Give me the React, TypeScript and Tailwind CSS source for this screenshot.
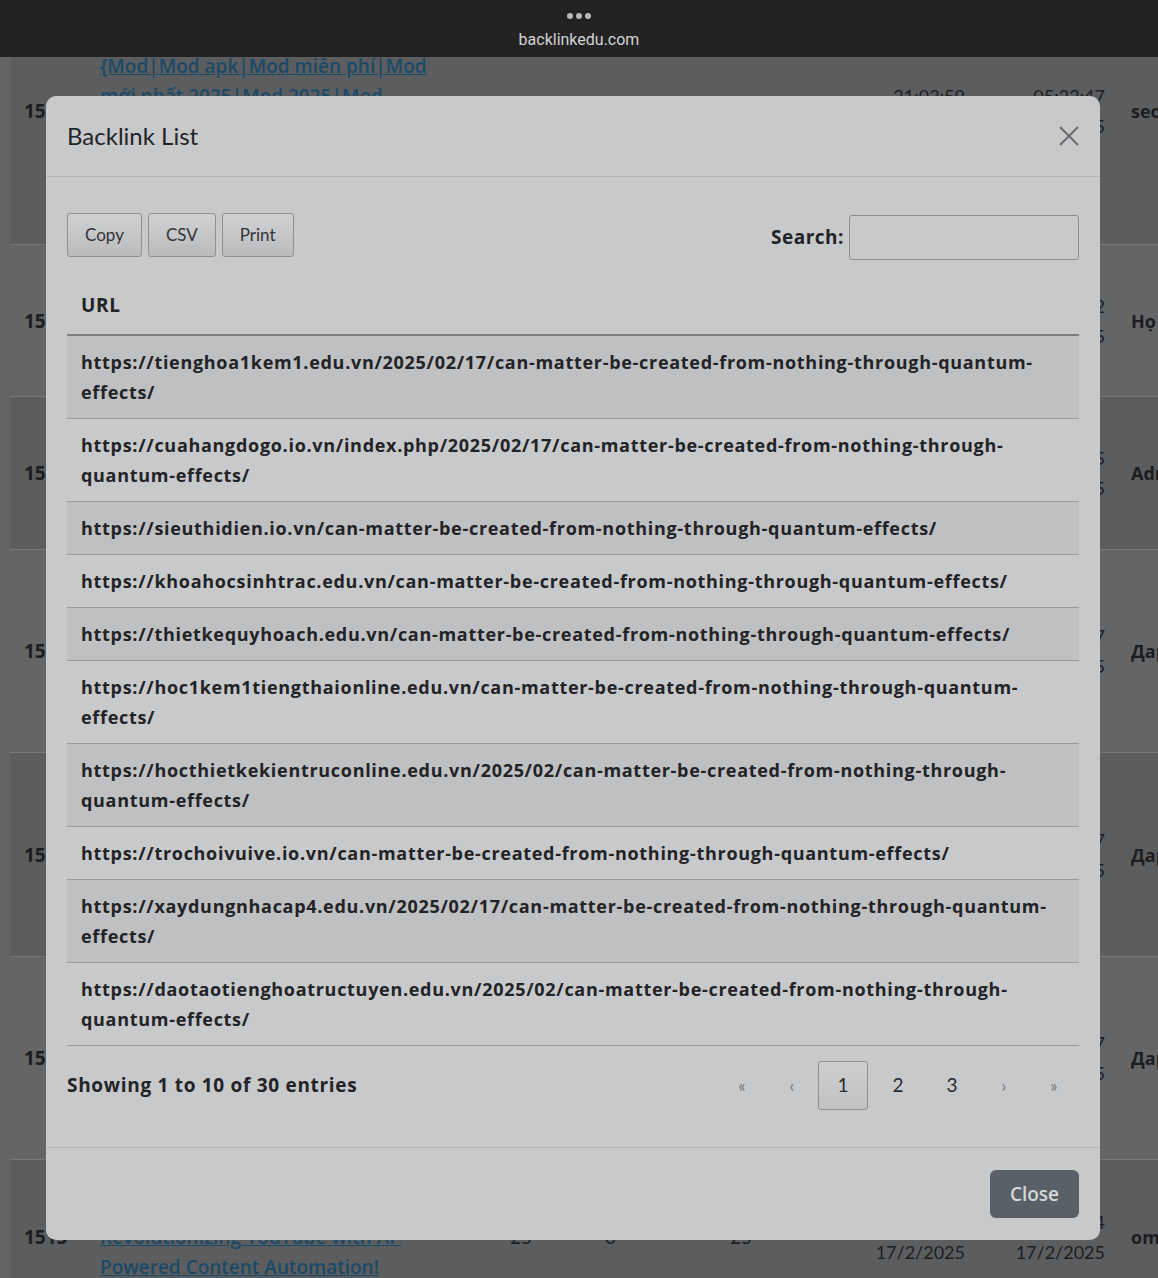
import React from "react";

const urls = [
  "https://tienghoa1kem1.edu.vn/2025/02/17/can-matter-be-created-from-nothing-through-quantum-effects/",
  "https://cuahangdogo.io.vn/index.php/2025/02/17/can-matter-be-created-from-nothing-through-quantum-effects/",
  "https://sieuthidien.io.vn/can-matter-be-created-from-nothing-through-quantum-effects/",
  "https://khoahocsinhtrac.edu.vn/can-matter-be-created-from-nothing-through-quantum-effects/",
  "https://thietkequyhoach.edu.vn/can-matter-be-created-from-nothing-through-quantum-effects/",
  "https://hoc1kem1tiengthaionline.edu.vn/can-matter-be-created-from-nothing-through-quantum-effects/",
  "https://hocthietkekientruconline.edu.vn/2025/02/can-matter-be-created-from-nothing-through-quantum-effects/",
  "https://trochoivuive.io.vn/can-matter-be-created-from-nothing-through-quantum-effects/",
  "https://xaydungnhacap4.edu.vn/2025/02/17/can-matter-be-created-from-nothing-through-quantum-effects/",
  "https://daotaotienghoatructuyen.edu.vn/2025/02/can-matter-be-created-from-nothing-through-quantum-effects/",
];

type BgRow = {
  id: string;
  title?: string[];
  views?: string;
  zero?: string;
  total?: string;
  t1?: string;
  t2: string;
  user: string;
  h: string;
};

// rows of the page behind the dialog (only the parts that peek out are filled)
const bgRows: BgRow[] = [
  {
    id: "1521",
    title: ["{Mod|Mod apk|Mod miễn phí|Mod", "mới nhất 2025|Mod 2025|Mod", "game|Mod free} tải game", "miễn phí"],
    t1: "21:03:59",
    t2: "05:22:47",
    user: "seoteam",
    h: "h-[268px]",
  },
  { id: "1520", t2: "05:20:32", user: "Họ Tên", h: "h-[152px]" },
  { id: "1519", t2: "05:19:15", user: "Admin", h: "h-[153px]" },
  { id: "1518", t2: "05:17:27", user: "Дарья", h: "h-[203px]" },
  { id: "1517", t2: "05:15:57", user: "Дарья", h: "h-[204px]" },
  { id: "1516", t2: "05:13:37", user: "Дарья", h: "h-[203px]" },
  {
    id: "1515",
    title: ["Tubemagic Review:", "Revolutionizing YouTube with AI-", "Powered Content Automation!"],
    views: "25",
    zero: "0",
    total: "25",
    t1: "20:03:14",
    t2: "05:11:24",
    user: "omar",
    h: "h-[154px]",
  },
];

function BackgroundPage() {
  return (
    <div className="-mt-[80px] pl-[10px] text-[18px] leading-[30px] text-[#1c1d1f]">
      {bgRows.map((r, i) => (
        <div
          key={r.id}
          className={`grid ${r.h} grid-cols-[76px_410px_95px_125px_125px_138px_137px_60px] items-center border-b border-[#77787a] ${
            i % 2 === 0 ? "bg-[#5c5d5f]" : "bg-[#646567]"
          }`}
        >
          <div className="pl-[14px] font-['Open_Sans',sans-serif] text-[19px] font-bold">{r.id}</div>
          <div className="pl-[14px] font-['Open_Sans',sans-serif] text-[19px] font-semibold text-[#1b4a68]">
            {r.title?.map((l) => (
              <div key={l} className="whitespace-nowrap">
                <span className="underline">{l}</span>
              </div>
            ))}
          </div>
          <div className="pl-[14px] text-[19px]">{r.views}</div>
          <div className="pl-[14px] text-[19px]">{r.zero}</div>
          <div className="pl-[14px] text-[19px]">{r.total}</div>
          <div className="pr-[14px] text-right">
            {r.t1 && <div>{r.t1}</div>}
            {r.t1 && <div>17/2/2025</div>}
          </div>
          <div className="pr-[11px] text-right">
            <div>{r.t2}</div>
            <div>17/2/2025</div>
          </div>
          <div className="pl-[15px] font-['Open_Sans',sans-serif] font-bold whitespace-nowrap">{r.user}</div>
        </div>
      ))}
    </div>
  );
}

function ToolButton({ label }: { label: string }) {
  return (
    <button className="h-[44px] rounded-[3px] border border-[#8f9092] bg-gradient-to-b from-[#d0d1d3] to-[#babbbd] px-[17px] text-[17px] text-[#333436]">
      {label}
    </button>
  );
}

function Pager() {
  const items = [
    { label: "«", ml: "ml-0", muted: true },
    { label: "‹", ml: "ml-0", muted: true },
    { label: "1", ml: "ml-[1px]", active: true },
    { label: "2", ml: "ml-[5px]" },
    { label: "3", ml: "ml-[4px]" },
    { label: "›", ml: "ml-[2px]", muted: true },
    { label: "»", ml: "ml-0", muted: true },
  ];
  return (
    <div className="flex items-center">
      {items.map((it, i) => (
        <div
          key={i}
          className={`flex h-[49px] w-[50px] items-center justify-center ${it.ml} ${
            it.active
              ? "rounded-[3px] border border-[#8f9092] bg-gradient-to-b from-[#cdced0] to-[#c1c2c4]"
              : ""
          } ${it.muted ? "text-[17px] text-[#737476]" : "text-[19px] text-[#2a2b2d]"}`}
        >
          {it.label}
        </div>
      ))}
    </div>
  );
}

function BacklinkModal() {
  return (
    <div className="absolute left-[46px] top-[96px] w-[1054px] rounded-[10px] bg-[#c8c9cb] text-[#222326]">
      <div className="flex h-[81px] items-center justify-between border-b border-[#b5b6b8] px-[21px]">
        <h2 className="text-[24px] font-normal">Backlink List</h2>
        <svg width="20" height="20" viewBox="0 0 20 20" className="text-[#6a6b6d]">
          <path d="M1 1 L19 19 M19 1 L1 19" stroke="currentColor" strokeWidth="2" />
        </svg>
      </div>

      <div className="px-[21px] pb-[37px] pt-[36px]">
        <div className="flex items-start justify-between">
          <div className="flex gap-[6px]">
            <ToolButton label="Copy" />
            <ToolButton label="CSV" />
            <ToolButton label="Print" />
          </div>
          <label className="mt-[2px] flex items-center gap-[5px]">
            <span className="font-['Open_Sans',sans-serif] text-[19px] font-bold tracking-[0.5px]">Search:</span>
            <input className="h-[45px] w-[230px] rounded-[3px] border border-[#8c8d8f] bg-[#c8c9cb]" />
          </label>
        </div>

        <table className="mt-[15px] w-full border-collapse font-['Open_Sans',sans-serif]">
          <thead>
            <tr className="border-b-2 border-[#7e7f81]">
              <th className="px-[14px] pb-[14px] pt-[15px] text-left text-[19px] font-bold leading-[30px] tracking-[0.7px]">
                URL
              </th>
            </tr>
          </thead>
          <tbody>
            {urls.map((u, i) => (
              <tr key={u} className={`border-b border-[#9a9b9d] ${i % 2 === 0 ? "bg-[#bfc0c2]" : ""}`}>
                <td className="px-[14px] py-[11px] text-[18px] font-bold leading-[30px] tracking-[0.7px]">{u}</td>
              </tr>
            ))}
          </tbody>
        </table>

        <div className="mt-[15px] flex items-center justify-between">
          <div className="font-['Open_Sans',sans-serif] text-[19px] font-bold tracking-[0.7px]">
            Showing 1 to 10 of 30 entries
          </div>
          <Pager />
        </div>
      </div>

      <div className="flex justify-end border-t border-[#b5b6b8] px-[21px] py-[22px]">
        <button className="h-[48px] w-[89px] rounded-[6px] bg-[#5a6068] font-['Open_Sans',sans-serif] text-[19px] font-semibold text-[#d6d7d9]">
          Close
        </button>
      </div>
    </div>
  );
}

export default function App() {
  return (
    <div className="relative h-[1278px] overflow-hidden bg-[#646567] font-['Lato','Noto_Sans',sans-serif]">
      <div className="relative z-10 flex h-[57px] flex-col items-center bg-[#232323] font-['Roboto',sans-serif]">
        <div className="mt-[13px] flex gap-[3px]">
          <span className="h-[6px] w-[6px] rounded-full bg-[#b9b9b9]" />
          <span className="h-[6px] w-[6px] rounded-full bg-[#b9b9b9]" />
          <span className="h-[6px] w-[6px] rounded-full bg-[#b9b9b9]" />
        </div>
        <div className="mt-[11px] text-[16px] leading-[20px] text-[#d3d3d3]">backlinkedu.com</div>
      </div>
      <BackgroundPage />
      <BacklinkModal />
    </div>
  );
}
